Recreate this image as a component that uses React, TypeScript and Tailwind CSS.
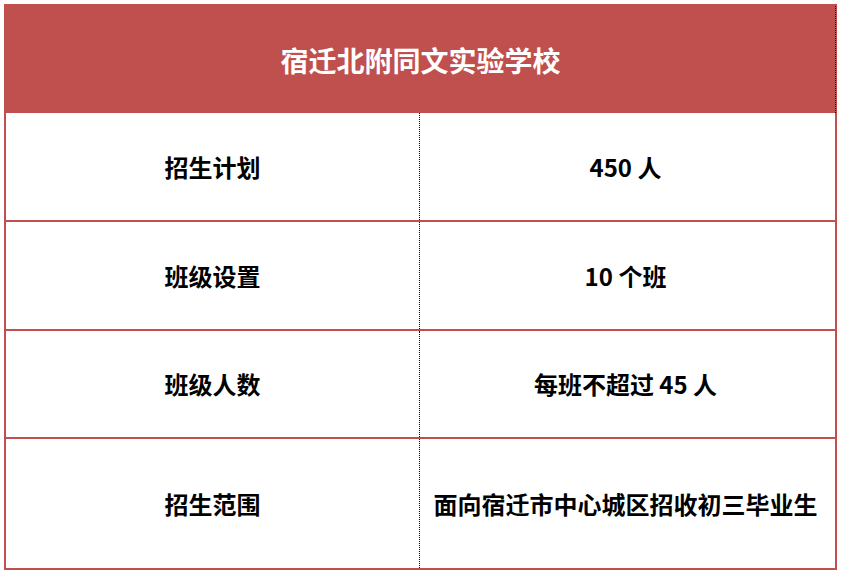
const rows = [
  { label: "招生计划", value: "450 人", h: "h-[107px]" },
  { label: "班级设置", value: "10 个班", h: "h-[109px]" },
  { label: "班级人数", value: "每班不超过 45 人", h: "h-[108px]" },
  { label: "招生范围", value: "面向宿迁市中心城区招收初三毕业生", h: "h-[131px]" },
];

export default function App() {
  return (
    <div className="bg-white w-[841px] h-[574px] pt-[4px] pl-[4px]" style={{ fontFamily: '"Noto Sans CJK SC", "Noto Sans", sans-serif' }}>
      <div className="w-[833px] border-2 border-[#c0504d]">
        <div className="h-[107px] bg-[#c0504d] flex items-center justify-center text-white font-bold text-[28px] border-r border-dotted border-r-black -mr-[1px]">
          宿迁北附同文实验学校
        </div>
        {rows.map((r, i) => (
          <div
            key={r.label}
            className={`flex ${r.h} ${i > 0 ? "border-t-2 border-[#c0504d]" : ""}`}
          >
            <div className="w-[414px] flex items-center justify-center font-bold text-[24px] text-black border-r border-dotted border-r-black">
              {r.label}
            </div>
            <div className="flex-1 flex items-center justify-center pr-[4px] font-bold text-[24px] text-black">
              {r.value}
            </div>
          </div>
        ))}
      </div>
    </div>
  );
}
